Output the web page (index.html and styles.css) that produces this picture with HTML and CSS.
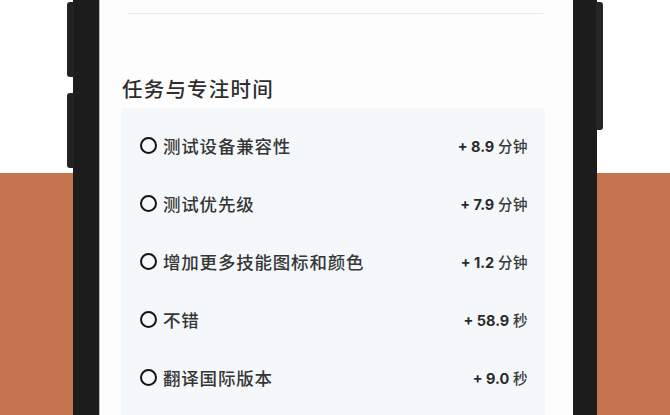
FILE: index.html
```html
<!DOCTYPE html>
<html lang="zh">
<head>
<meta charset="utf-8">
<title>任务与专注时间</title>
<link rel="stylesheet" href="styles.css">
</head>
<body>
<div class="stage">
  <div class="phone">
    <span class="btn btn-l1"></span>
    <span class="btn btn-l2"></span>
    <span class="btn btn-r1"></span>
    <div class="screen">
      <div class="divider"></div>
      <h2 class="heading">任务与专注时间</h2>
      <ul class="card">
        <li class="row"><span class="check"></span><span class="name">测试设备兼容性</span><span class="val"><b>+ 8.9</b> 分钟</span></li>
        <li class="row"><span class="check"></span><span class="name">测试优先级</span><span class="val"><b>+ 7.9</b> 分钟</span></li>
        <li class="row"><span class="check"></span><span class="name">增加更多技能图标和颜色</span><span class="val"><b>+ 1.2</b> 分钟</span></li>
        <li class="row"><span class="check"></span><span class="name">不错</span><span class="val"><b>+ 58.9</b> 秒</span></li>
        <li class="row"><span class="check"></span><span class="name">翻译国际版本</span><span class="val"><b>+ 9.0</b> 秒</span></li>
      </ul>
    </div>
  </div>
</div>
</body>
</html>
```
FILE: styles.css
```css
html, body {
  margin: 0;
  padding: 0;
  height: 100%;
  overflow: hidden;
}
body {
  background: linear-gradient(to bottom, #ffffff 0, #ffffff 173px, #c47550 173px, #c47550 100%);
  font-family: "Noto Sans CJK SC", "Noto Sans", sans-serif;
}
.stage {
  height: 415px;
  padding-left: 73px;
}
.phone {
  position: relative;
  width: 524px;
  height: 415px;
  box-sizing: border-box;
  background: #1c1c1c;
  padding: 0 24px 0 26px;
}
.btn {
  position: absolute;
  background: #222;
  width: 7px;
}
.btn-l1 { left: -6px; top: 2px; height: 75px; border-radius: 3px 0 0 3px; }
.btn-l2 { left: -6px; top: 93px; height: 75px; border-radius: 3px 0 0 3px; }
.btn-r1 { right: -6px; top: 2px; height: 128px; border-radius: 0 3px 3px 0; background: #262626; }
.screen {
  height: 415px;
  box-sizing: border-box;
  background: #fdfdfd;
  border-left: 1px solid #bdbdbd;
  padding: 13px 26px 0 22px;
  display: flex;
  flex-direction: column;
}
.divider {
  height: 1px;
  background: #ececec;
  margin: 0 4px 0 5px;
}
.heading {
  margin: 60px 0 0 0;
  font-size: 20.5px;
  line-height: 28px;
  font-weight: 500;
  letter-spacing: 1.2px;
  color: #2e2e2e;
}
.card {
  list-style: none;
  flex: 1;
  margin: 6px 2px 0 -1px;
  padding: 8px 17px 0 19px;
  background: #f5f8fb;
  border-radius: 3px 3px 0 0;
}
.row {
  height: 58px;
  display: flex;
  align-items: center;
}
.check {
  width: 17px;
  height: 17px;
  box-sizing: border-box;
  border: 2.6px solid #141414;
  border-radius: 50%;
  flex: none;
  margin-right: 6px;
}
.name {
  flex: 1;
  font-size: 17.5px;
  font-weight: 500;
  letter-spacing: 0.8px;
  color: #363636;
}
.val {
  font-size: 14.5px;
  font-weight: 500;
  color: #3a3a3a;
  letter-spacing: 0.5px;
}
.val b {
  font-family: Inter, "Noto Sans", sans-serif;
  font-weight: 700;
  color: #2a2a2a;
  letter-spacing: 0;
}
```
